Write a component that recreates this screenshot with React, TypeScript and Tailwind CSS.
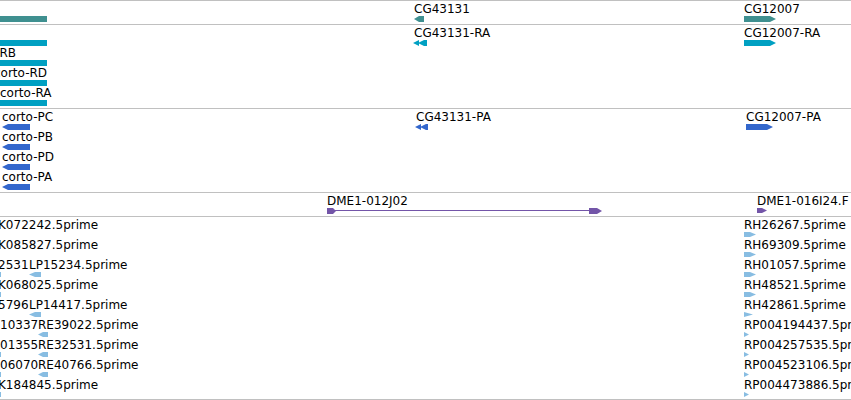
import React from "react";

type Shape = "rect" | "left" | "right" | "dblLeft" | "tri" | "pennant";

type Feature = {
  x: number;
  w: number;
  row: number;
  shape: Shape;
  color: string;
  h?: number;
};

type Label = { x: number; row: number; text: string };

const TEAL = "#3f9090";
const CYAN = "#00a0c2";
const BLUE = "#3367cc";
const PURPLE = "#7355a8";
const EST = "#88bde2";

const points = (shape: Shape, w: number, h: number): string[] => {
  const t = Math.min(6, w / 2);
  switch (shape) {
    case "left":
      return [`0,${h / 2} ${t},0 ${w},0 ${w},${h} ${t},${h}`];
    case "right":
      return [`0,0 ${w - t},0 ${w},${h / 2} ${w - t},${h} 0,${h}`];
    case "pennant":
      return [`0,${h / 2} 5,0 ${w},0 ${w},${h} 5,${h}`];
    case "dblLeft":
      return [`0,${h / 2} 6,0 6,${h}`, `5,${h / 2} 11,0 ${w},0 ${w},${h} 11,${h}`];
    case "tri":
      return [`0,0 ${w},${h / 2} 0,${h}`];
    default:
      return [`0,0 ${w},0 ${w},${h} 0,${h}`];
  }
};

const Glyph = ({ f }: { f: Feature }) => {
  const h = f.h ?? 6;
  return (
    <svg
      className="absolute"
      style={{ left: f.x, top: 15 + f.row * 20 }}
      width={f.w}
      height={h}
      viewBox={`0 0 ${f.w} ${h}`}
    >
      {points(f.shape, f.w, h).map((p, i) => (
        <polygon key={i} points={p} fill={f.color} />
      ))}
    </svg>
  );
};

const Text = ({ l }: { l: Label }) => (
  <span
    className="absolute whitespace-nowrap"
    style={{ left: l.x, top: 1 + l.row * 20 }}
  >
    {l.text}
  </span>
);

const Track = ({
  height,
  features,
  labels,
  children,
}: {
  height: string;
  features: Feature[];
  labels: Label[];
  children?: React.ReactNode;
}) => (
  <div className={`relative shrink-0 ${height}`}>
    {labels.map((l, i) => (
      <Text key={i} l={l} />
    ))}
    {features.map((f, i) => (
      <Glyph key={i} f={f} />
    ))}
    {children}
  </div>
);

const Rule = () => <div className="h-px shrink-0 bg-[#c0c0c0]" />;

const genes: { f: Feature[]; l: Label[] } = {
  f: [
    { x: 0, w: 47, row: 0, shape: "rect", color: TEAL },
    { x: 414, w: 10, row: 0, shape: "pennant", color: TEAL },
    { x: 744, w: 32, row: 0, shape: "right", color: TEAL },
  ],
  l: [
    { x: 414, row: 0, text: "CG43131" },
    { x: 744, row: 0, text: "CG12007" },
  ],
};

const transcripts: { f: Feature[]; l: Label[] } = {
  f: [
    { x: 0, w: 47, row: 0, shape: "rect", color: CYAN },
    { x: 0, w: 47, row: 1, shape: "rect", color: CYAN },
    { x: 0, w: 47, row: 2, shape: "rect", color: CYAN },
    { x: 0, w: 47, row: 3, shape: "rect", color: CYAN },
    { x: 413, w: 14, row: 0, shape: "dblLeft", color: CYAN },
    { x: 744, w: 32, row: 0, shape: "right", color: CYAN },
  ],
  l: [
    { x: -60, row: 0, text: "corto-RC" },
    { x: -36, row: 1, text: "corto-RB" },
    { x: -6, row: 2, text: "corto-RD" },
    { x: 0, row: 3, text: "corto-RA" },
    { x: 414, row: 0, text: "CG43131-RA" },
    { x: 744, row: 0, text: "CG12007-RA" },
  ],
};

const proteins: { f: Feature[]; l: Label[] } = {
  f: [
    { x: 2, w: 28, row: 0, shape: "left", color: BLUE },
    { x: 2, w: 28, row: 1, shape: "left", color: BLUE },
    { x: 2, w: 28, row: 2, shape: "left", color: BLUE },
    { x: 2, w: 28, row: 3, shape: "left", color: BLUE },
    { x: 415, w: 13, row: 0, shape: "dblLeft", color: BLUE },
    { x: 746, w: 27, row: 0, shape: "right", color: BLUE },
  ],
  l: [
    { x: 2, row: 0, text: "corto-PC" },
    { x: 2, row: 1, text: "corto-PB" },
    { x: 2, row: 2, text: "corto-PD" },
    { x: 2, row: 3, text: "corto-PA" },
    { x: 416, row: 0, text: "CG43131-PA" },
    { x: 746, row: 0, text: "CG12007-PA" },
  ],
};

const clones: { f: Feature[]; l: Label[] } = {
  f: [{ x: 757, w: 10, row: 0, shape: "right", color: PURPLE, h: 5 }],
  l: [
    { x: 327, row: 0, text: "DME1-012J02" },
    { x: 757, row: 0, text: "DME1-016I24.F" },
  ],
};

const estRight = [
  "RH26267.5prime",
  "RH69309.5prime",
  "RH01057.5prime",
  "RH48521.5prime",
  "RH42861.5prime",
  "RP004194437.5prime",
  "RP004257535.5prime",
  "RP004523106.5prime",
  "RP004473886.5prime",
];

const ests: { f: Feature[]; l: Label[] } = {
  f: [
    ...[2, 3, 6, 7, 8].map((row) => ({
      x: 0,
      w: 1,
      row,
      shape: "rect" as Shape,
      color: EST,
      h: 5,
    })),
    { x: 29, w: 12, row: 2, shape: "left", color: EST, h: 5 },
    { x: 29, w: 12, row: 4, shape: "left", color: EST, h: 5 },
    { x: 38, w: 10, row: 5, shape: "left", color: EST, h: 5 },
    { x: 38, w: 10, row: 6, shape: "left", color: EST, h: 5 },
    { x: 38, w: 10, row: 7, shape: "left", color: EST, h: 5 },
    ...[0, 1, 2, 3].map((row) => ({
      x: 744,
      w: 12,
      row,
      shape: "right" as Shape,
      color: EST,
      h: 5,
    })),
    { x: 744, w: 9, row: 4, shape: "tri", color: EST, h: 5 },
    ...[5, 6, 7, 8].map((row) => ({
      x: 744,
      w: 5,
      row,
      shape: "tri" as Shape,
      color: EST,
      h: 5,
    })),
  ],
  l: [
    { x: -2, row: 0, text: "K072242.5prime" },
    { x: -2, row: 1, text: "K085827.5prime" },
    { x: -2, row: 2, text: "2531" },
    { x: 29, row: 2, text: "LP15234.5prime" },
    { x: -2, row: 3, text: "K068025.5prime" },
    { x: -2, row: 4, text: "5796" },
    { x: 29, row: 4, text: "LP14417.5prime" },
    { x: 0, row: 5, text: "10337" },
    { x: 38, row: 5, text: "RE39022.5prime" },
    { x: 0, row: 6, text: "01355" },
    { x: 38, row: 6, text: "RE32531.5prime" },
    { x: 0, row: 7, text: "06070" },
    { x: 38, row: 7, text: "RE40766.5prime" },
    { x: -2, row: 8, text: "K184845.5prime" },
    ...estRight.map((text, row) => ({ x: 744, row, text })),
  ],
};

export default function App() {
  return (
    <div className="flex h-[400px] w-[851px] flex-col overflow-hidden bg-white font-['DejaVu_Sans',sans-serif] text-[12px] leading-[14px] text-black">
      <Rule />
      <Track height="h-[23px]" features={genes.f} labels={genes.l} />
      <Rule />
      <Track height="h-[83px]" features={transcripts.f} labels={transcripts.l} />
      <Rule />
      <Track height="h-[83px]" features={proteins.f} labels={proteins.l} />
      <Rule />
      <Track height="h-[23px]" features={clones.f} labels={clones.l}>
        {/* clone pair joined by a thin line */}
        <svg className="absolute left-[327px] top-[15px]" width="275" height="6" viewBox="0 0 275 6">
          <polygon points="0,0 6,0 9,3 6,6 0,6" fill={PURPLE} />
          <rect x="8" y="2" width="256" height="1" fill={PURPLE} />
          <polygon points="262,0 270,0 275,3 270,6 262,6" fill={PURPLE} />
        </svg>
      </Track>
      <Rule />
      <Track height="h-[182px]" features={ests.f} labels={ests.l} />
      <Rule />
    </div>
  );
}
